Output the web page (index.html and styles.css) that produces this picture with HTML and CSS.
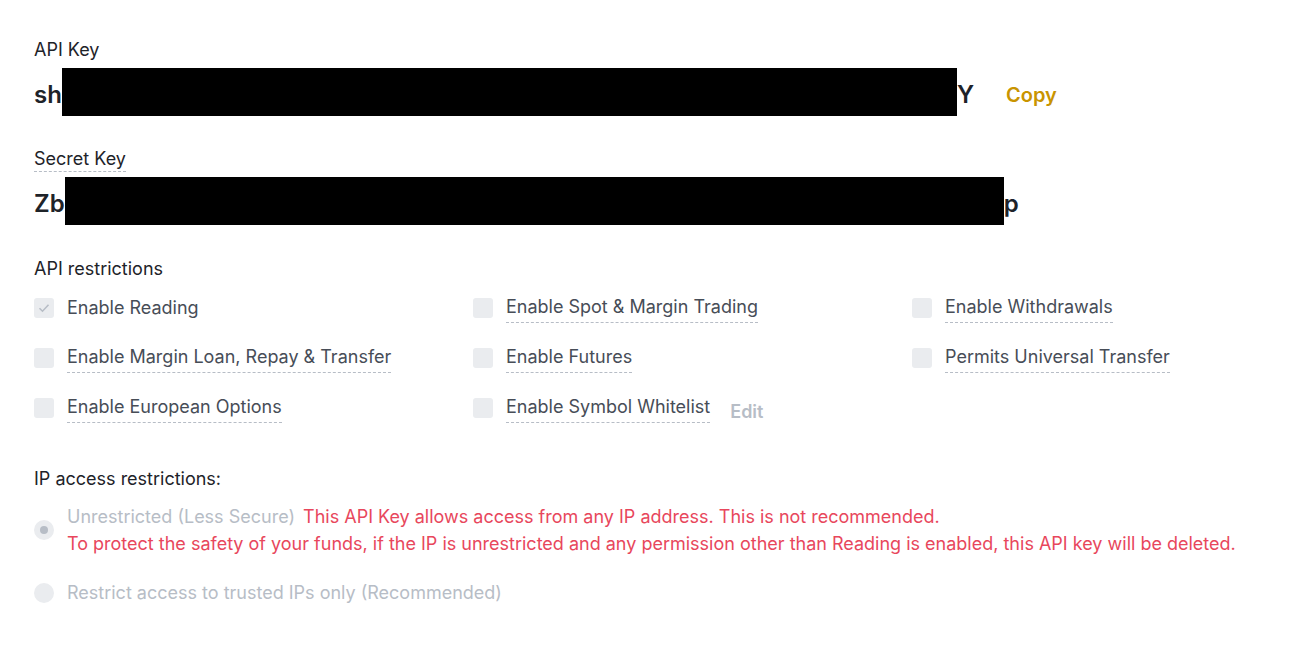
FILE: index.html
```html
<!DOCTYPE html>
<html lang="en">
<head>
    <meta charset="UTF-8">
    <title>API Key</title>
    <link rel="stylesheet" href="styles.css">
</head>
<body>
    <div class="page">
        <div class="field-label">API Key</div>
        <div class="key-row">
            <span class="key-text">sh</span><span class="redact redact-api"></span><span class="key-text">Y</span>
            <span class="copy">Copy</span>
        </div>

        <div class="field-label secret"><span class="dotted">Secret Key</span></div>
        <div class="key-row">
            <span class="key-text">Zb</span><span class="redact redact-secret"></span><span class="key-text">p</span>
        </div>

        <div class="section-label">API restrictions</div>
        <div class="perm-grid">
            <div class="perm">
                <span class="check checked">
                    <svg width="14" height="14" viewBox="0 0 14 14"><path d="M2.5 7.2l3 3 6-6.4" fill="none" stroke="#b7bdc6" stroke-width="1.6"/></svg>
                </span>
                <span class="perm-text">Enable Reading</span>
            </div>
            <div class="perm">
                <span class="check"></span>
                <span class="perm-text dotted">Enable Spot &amp; Margin Trading</span>
            </div>
            <div class="perm">
                <span class="check"></span>
                <span class="perm-text dotted">Enable Withdrawals</span>
            </div>
            <div class="perm">
                <span class="check"></span>
                <span class="perm-text dotted">Enable Margin Loan, Repay &amp; Transfer</span>
            </div>
            <div class="perm">
                <span class="check"></span>
                <span class="perm-text dotted">Enable Futures</span>
            </div>
            <div class="perm">
                <span class="check"></span>
                <span class="perm-text dotted">Permits Universal Transfer</span>
            </div>
            <div class="perm">
                <span class="check"></span>
                <span class="perm-text dotted">Enable European Options</span>
            </div>
            <div class="perm">
                <span class="check"></span>
                <span class="perm-text dotted">Enable Symbol Whitelist</span>
                <span class="edit">Edit</span>
            </div>
        </div>

        <div class="section-label ip-label">IP access restrictions:</div>
        <div class="radio-row first">
            <span class="radio selected"><span class="dot"></span></span>
            <div class="radio-text">
                <span class="muted">Unrestricted (Less Secure)</span>
                <span class="warn">This API Key allows access from any IP address. This is not recommended.</span><br>
                <span class="warn">To protect the safety of your funds, if the IP is unrestricted and any permission other than Reading is enabled, this API key will be deleted.</span>
            </div>
        </div>
        <div class="radio-row">
            <span class="radio"></span>
            <div class="radio-text"><span class="muted">Restrict access to trusted IPs only (Recommended)</span></div>
        </div>
    </div>
</body>
</html>
```

FILE: styles.css
```css
body {
    margin: 0;
    background: #fff;
    font-family: Inter, "Noto Sans", Arial, sans-serif;
    color: #1e2329;
}
.page {
    padding: 37px 34px 0 34px;
}
.field-label {
    font-size: 18px;
    line-height: 26px;
    color: #1e2329;
}
.secret {
    margin-top: 30px;
}
.dotted {
    border-bottom: 1px dashed #b7bdc6;
    padding-bottom: 2px;
}
.key-row {
    display: flex;
    align-items: center;
    height: 48px;
    margin-top: 5px;
}
.key-text {
    font-size: 24px;
    font-weight: 600;
    color: #1e2329;
    line-height: 48px;
    position: relative;
    top: 3px;
}
.redact {
    display: inline-block;
    height: 48px;
    background: #000;
}
.redact-api {
    width: 895px;
}
.redact-secret {
    width: 939px;
}
.copy {
    margin-left: 32px;
    font-size: 20px;
    font-weight: 600;
    color: #c99400;
    position: relative;
    top: 3px;
}
.section-label {
    font-size: 18px;
    line-height: 26px;
    margin-top: 31px;
    color: #1e2329;
}
.perm-grid {
    display: grid;
    grid-template-columns: 439px 439px 1fr;
    row-gap: 24px;
    margin-top: 13px;
}
.perm {
    display: flex;
    align-items: center;
    height: 26px;
}
.check {
    width: 20px;
    height: 20px;
    border-radius: 3px;
    background: #eaecef;
    margin-right: 13px;
    display: flex;
    align-items: center;
    justify-content: center;
    flex-shrink: 0;
}
.perm-text {
    font-size: 18px;
    color: #474d57;
    line-height: 26px;
}
.edit {
    margin-left: 20px;
    font-size: 18px;
    font-weight: 600;
    color: #b7bdc6;
    position: relative;
    top: 3px;
}
.ip-label {
    margin-top: 45px;
}
.radio-row {
    display: flex;
    align-items: center;
}
.radio-row.first {
    margin-top: 11px;
}
.radio-row + .radio-row {
    margin-top: 22px;
}
.radio {
    width: 20px;
    height: 20px;
    border-radius: 50%;
    background: #eaecef;
    margin-right: 13px;
    display: flex;
    align-items: center;
    justify-content: center;
    flex-shrink: 0;
}
.radio .dot {
    width: 8px;
    height: 8px;
    border-radius: 50%;
    background: #b7bdc6;
}
.radio-text {
    font-size: 18px;
    line-height: 27px;
}
.muted {
    color: #b7bdc6;
    margin-right: 3px;
}
.warn {
    color: #e8475c;
}
```
